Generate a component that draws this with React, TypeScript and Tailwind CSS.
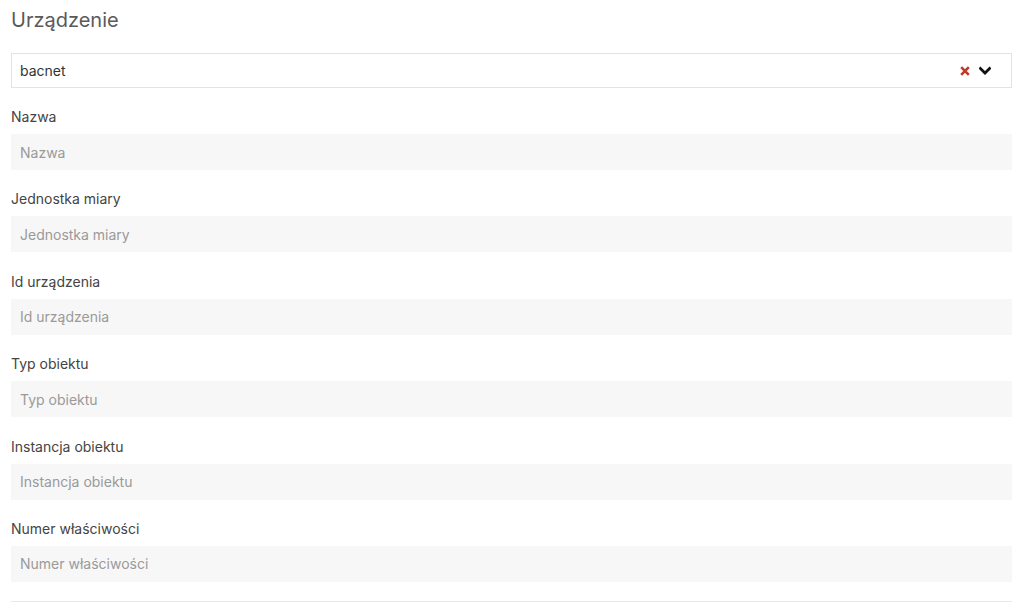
import React from "react";

const fields = [
  "Nazwa",
  "Jednostka miary",
  "Id urządzenia",
  "Typ obiektu",
  "Instancja obiektu",
  "Numer właściwości",
];

export default function App() {
  return (
    <div
      className="w-[1024px] h-[602px] overflow-hidden bg-white pl-[11px] pr-[12px] pt-[6px]"
      style={{ fontFamily: "Inter, 'Noto Sans', sans-serif" }}
    >
      <h2 className="text-[20px] leading-[28px] text-[#5a5a5a] font-normal mb-[19px]">
        Urządzenie
      </h2>
      <div className="h-[35px] border border-[#e3e3e3] flex items-center pl-[8px] pr-[20px]">
        <span className="text-[14px] text-[#333] flex-1">bacnet</span>
        <svg width="10" height="10" viewBox="0 0 10 10" className="mr-[9px]">
          <path d="M1.2 1.2 L8.8 8.8 M8.8 1.2 L1.2 8.8" stroke="#c0392b" strokeWidth="2.6" strokeLinecap="butt" />
        </svg>
        <svg width="12" height="10" viewBox="0 0 12 10">
          <path d="M1.4 2.4 L6 7 L10.6 2.4" stroke="#111" strokeWidth="2.7" fill="none" strokeLinecap="square" />
        </svg>
      </div>
      <div className="flex flex-col pt-[19px]">
        {fields.map((f) => (
          <div key={f} className="flex flex-col mb-[19.4px]">
            <label className="text-[14px] leading-[20px] text-[#444] mb-[7px]">{f}</label>
            <input
              readOnly
              placeholder={f}
              className="h-[36px] bg-[#f7f7f7] pl-[9px] text-[14px] text-[#333] placeholder:text-[#9a9a9a] outline-none"
            />
          </div>
        ))}
        <div className="border-t border-[#e8e8e8]" />
      </div>
    </div>
  );
}
